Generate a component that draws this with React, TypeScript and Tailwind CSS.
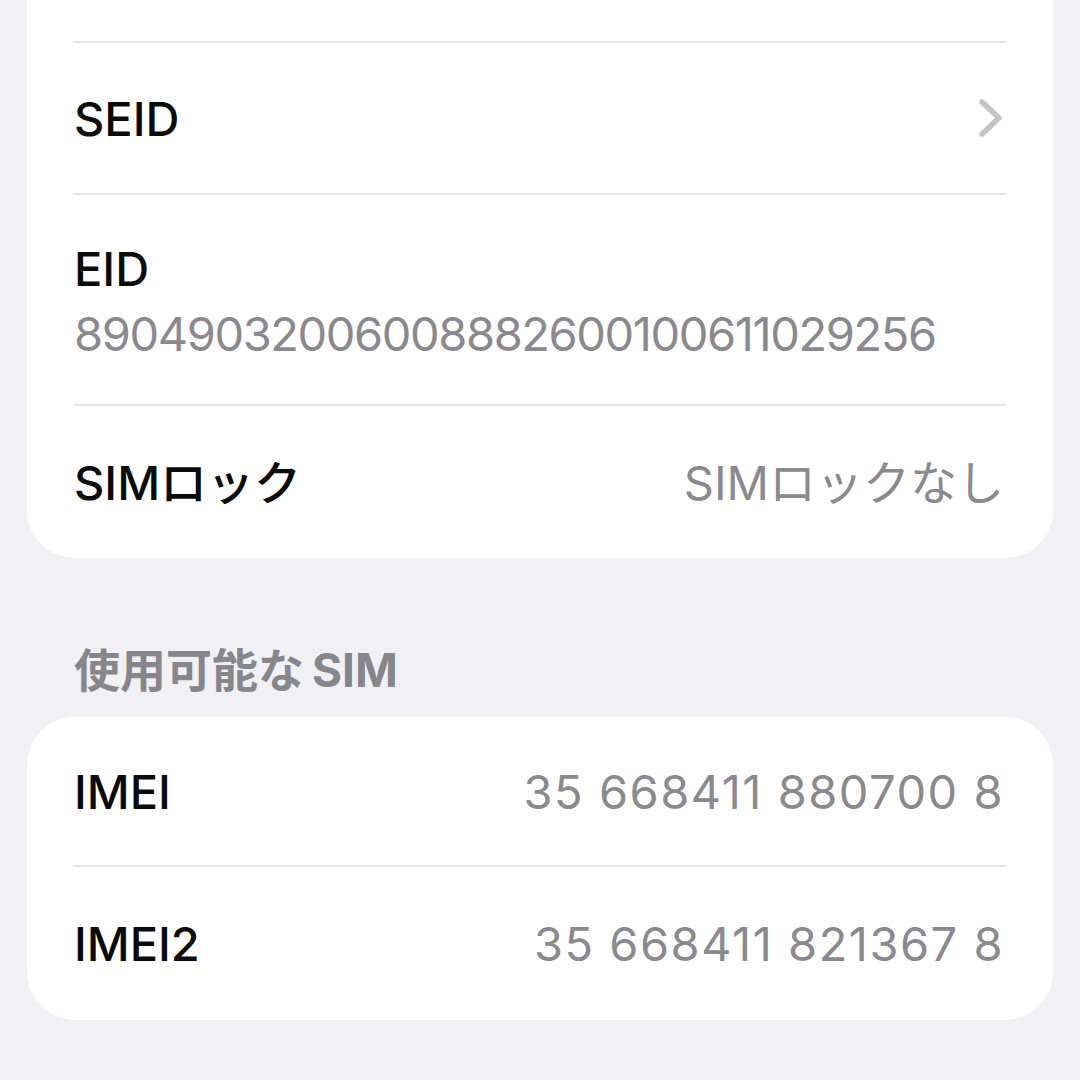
import { ReactNode } from "react";

function Separator() {
  return <div className="h-[2px] bg-[#e3e3e6]" />;
}

function Row({ label, value, chevron, className = "h-[150px]", valueClass = "" }: { label: string; value?: string; chevron?: boolean; className?: string; valueClass?: string }) {
  return (
    <div className={`flex items-center justify-between pl-px pr-[3px] ${className}`}>
      <span className="text-[47px] font-medium text-[#0b0b0b]">{label}</span>
      {value && <span className={`text-[47px] text-[#8a8a8e] ${valueClass}`}>{value}</span>}
      {chevron && (
        <svg width="26" height="40" viewBox="0 0 26 40" className="mr-[1px]">
          <polyline points="5,4 22,20 5,36" fill="none" stroke="#c4c4c7" strokeWidth="5.5" strokeLinecap="round" strokeLinejoin="round" />
        </svg>
      )}
    </div>
  );
}

function Card({ children, className = "" }: { children: ReactNode; className?: string }) {
  return <div className={`mx-[27px] rounded-[48px] bg-white px-[46px] ${className}`}>{children}</div>;
}

export default function App() {
  return (
    <div className="min-h-[1080px] bg-[#f0f0f5] font-[Inter,'Noto_Sans_CJK_JP',sans-serif] leading-none overflow-hidden">
      {/* top card, scrolled so its first row is off screen */}
      <Card className="-mt-[110px]">
        <div className="h-[151px]" />
        <Separator />
        <Row label="SEID" chevron />
        <Separator />
        <div className="flex h-[209px] flex-col justify-center gap-[8px] pl-px pt-[3px]">
          <span className="text-[47px] leading-[57px] font-medium text-[#0b0b0b]">EID</span>
          <span className="text-[47px] leading-[57px] tracking-[-1.4px] text-[#8a8a8e]">89049032006008882600100611029256</span>
        </div>
        <Separator />
        <Row label="SIMロック" value="SIMロックなし" className="h-[152px]" />
      </Card>

      <div className="flex h-[159px] items-end pb-[24px] pl-[74px]">
        <span className="text-[46px] font-bold text-[#86868b]">
          使用可能な<span className="ml-[8px]">SIM</span>
        </span>
      </div>

      <Card>
        <Row label="IMEI" value="35 668411 880700 8" className="h-[148px]" valueClass="tracking-[1.5px]" />
        <Separator />
        <Row label="IMEI2" value="35 668411 821367 8" className="h-[153px]" valueClass="tracking-[1.5px]" />
      </Card>
    </div>
  );
}
